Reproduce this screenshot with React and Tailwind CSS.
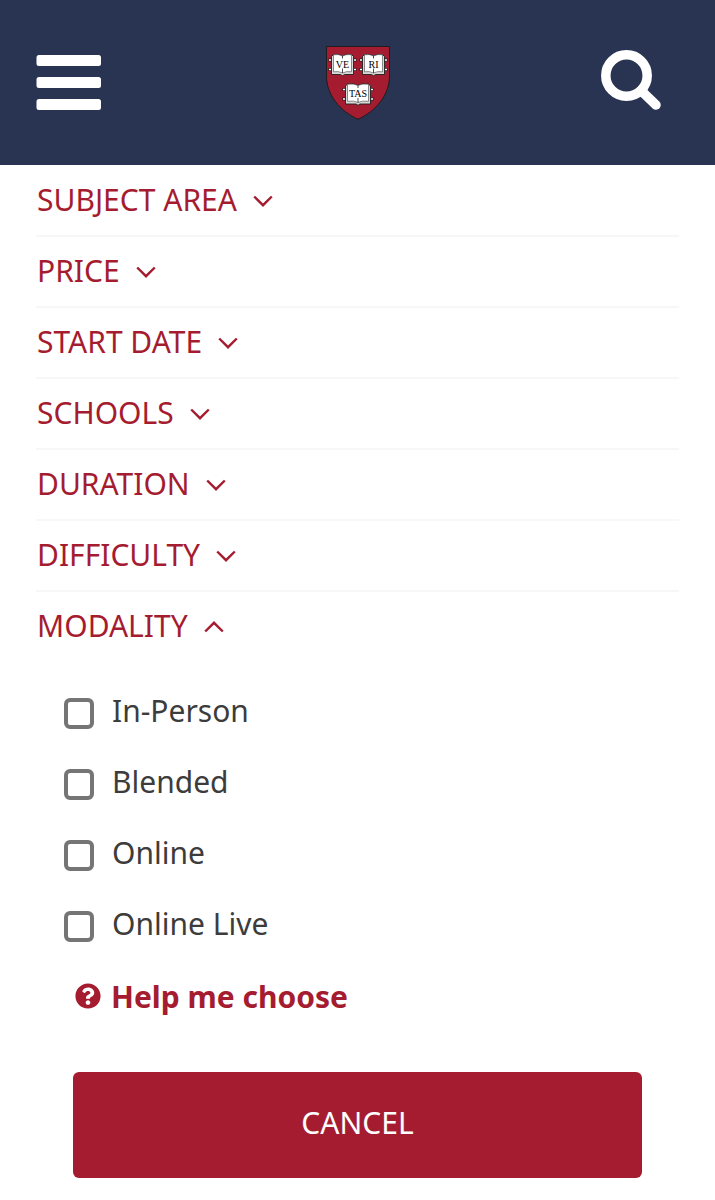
import { useState } from 'react';
import { FaQuestionCircle } from 'react-icons/fa';

const FILTERS = [
  { id: 'subject', label: 'Subject Area', options: [] },
  { id: 'price', label: 'Price', options: [] },
  { id: 'start-date', label: 'Start Date', options: [] },
  { id: 'schools', label: 'Schools', options: [] },
  { id: 'duration', label: 'Duration', options: [] },
  { id: 'difficulty', label: 'Difficulty', options: [] },
  { id: 'modality', label: 'Modality', options: ['In-Person', 'Blended', 'Online', 'Online Live'] },
];

function Book({ x, y, w, text }) {
  const mid = w / 2;
  return (
    <g transform={`translate(${x} ${y})`}>
      {/* clasps */}
      <path d={`M-3 6H0M-3 15.500H0M${w} 6h3M${w} 15.500h3`} stroke="#1e1e1e" strokeWidth="3" />
      <path d={`M-2.500 6H0M-2.500 15.500H0M${w} 6h2.500M${w} 15.500h2.500`} stroke="#fff" strokeWidth="1.700" />
      {/* cover and page edges */}
      <path
        d={`M0 2.500 2 .5Q${mid - 4} -.5 ${mid} 2Q${mid + 4} -.5 ${w - 2} .5L${w} 2.500V20.500H${mid + 2}L${mid} 21.800 ${mid - 2} 20.500H0Z`}
        fill="#d8d8d8"
        stroke="#1e1e1e"
        strokeWidth=".9"
      />
      <path
        d={`M2 .8Q${mid - 4} -.2 ${mid} 2Q${mid + 4} -.2 ${w - 2} .8V17.800Q${mid + 4} 16.800 ${mid} 19Q${mid - 4} 16.800 2 17.800Z`}
        fill="#fff"
        stroke="#444"
        strokeWidth=".6"
      />
      <path d={`M${mid} 2V4.500M${mid} 14.500V19`} stroke="#1e1e1e" strokeWidth=".8" />
      <text x={mid} y="13.500" textAnchor="middle" fontSize="10" fontFamily="Liberation Serif, serif" fill="#000">
        {text}
      </text>
    </g>
  );
}

function Shield() {
  return (
    <svg width="64" height="74" viewBox="0 0 64 74" aria-hidden="true">
      <path
        d="M.5.5H63.500V30C63.500 49 50 65 32 73.300 14 65 .5 49 .5 30Z"
        fill="#a51c30"
        stroke="#1e1e1e"
        strokeWidth="1"
      />
      <Book x={5.5} y={8} w={22} text="VE" />
      <Book x={36.5} y={8} w={22} text="RI" />
      <Book x={19.5} y={37.5} w={25} text="TAS" />
    </svg>
  );
}

function Header() {
  return (
    <header className="flex items-start justify-between bg-[#293352] pt-[46px] pr-[53px] pb-[45px] pl-9">
      <button type="button" aria-label="Menu" className="mt-[9px]">
        <svg width="66" height="56" viewBox="0 0 66 56" fill="#fff">
          <rect x="0.500" y="0" width="64.500" height="11" rx="2.500" />
          <rect x="0.500" y="22" width="64.500" height="11" rx="2.500" />
          <rect x="0.500" y="44" width="64.500" height="11" rx="2.500" />
        </svg>
      </button>
      <a href="#" aria-label="Home" className="pl-[13px]">
        <Shield />
      </a>
      <button type="button" aria-label="Search" className="mt-1">
        <svg width="62" height="62" viewBox="0 0 62 62" fill="none" stroke="#fff">
          <circle cx="26.500" cy="25.500" r="20.700" strokeWidth="9.500" />
          <path d="M42 41.500 56 55" strokeWidth="9.500" strokeLinecap="round" />
        </svg>
      </button>
    </header>
  );
}

function Chevron({ open }) {
  return (
    <svg width="20" height="14" viewBox="0 0 20 14" fill="none" stroke="currentColor" strokeWidth="2.400" className="mt-1" aria-hidden="true">
      <path d={open ? 'M1.200 11.500 10 2.800 18.800 11.500' : 'M1.200 2.500 10 11.200 18.800 2.500'} />
    </svg>
  );
}

function FilterSection({ filter, open, onToggle }) {
  return (
    <section className="border-b-2 border-[#f7f7f7] last:border-b-0">
      <h2>
        <button
          type="button"
          aria-expanded={open}
          onClick={() => onToggle(filter.id)}
          className="flex h-[69px] w-full items-center gap-4 pb-[3px] pl-px text-left text-[30px] uppercase text-[#a51c30]"
        >
          {filter.label}
          <Chevron open={open} />
        </button>
      </h2>

      {open && filter.options.length > 0 && (
        <div className="pt-[14px] pl-7">
          {filter.options.map((option) => (
            <label key={option} className="flex h-[71px] items-center gap-[18px] text-[30px] text-[#3c3c3c]">
              <input
                type="checkbox"
                name={filter.id}
                value={option}
                className="mt-[6px] h-[31px] w-[30px] appearance-none rounded-md border-4 border-[#757575] bg-white checked:bg-[#a51c30]"
              />
              {option}
            </label>
          ))}
          <a href="#" className="flex h-[74px] items-center gap-[10px] pl-[11px] text-[30px] font-bold text-[#a51c30]">
            <FaQuestionCircle size={26} />
            Help me choose
          </a>
        </div>
      )}
    </section>
  );
}

export default function App() {
  const [openId, setOpenId] = useState('modality');

  const handleToggle = (id) => {
    setOpenId((prev) => (prev === id ? null : id));
  };

  return (
    <div className="min-h-screen bg-white font-['Noto_Sans','Open_Sans',sans-serif]">
      <Header />
      <main className="px-9 pt-px">
        {FILTERS.map((filter) => (
          <FilterSection key={filter.id} filter={filter} open={openId === filter.id} onToggle={handleToggle} />
        ))}
      </main>
      <div className="px-[73px] pt-[39px] pb-[22px]">
        <button type="button" className="h-[106px] w-full rounded-md bg-[#a51c30] pb-[6px] text-[30px] uppercase text-white">
          Cancel
        </button>
      </div>
    </div>
  );
}
